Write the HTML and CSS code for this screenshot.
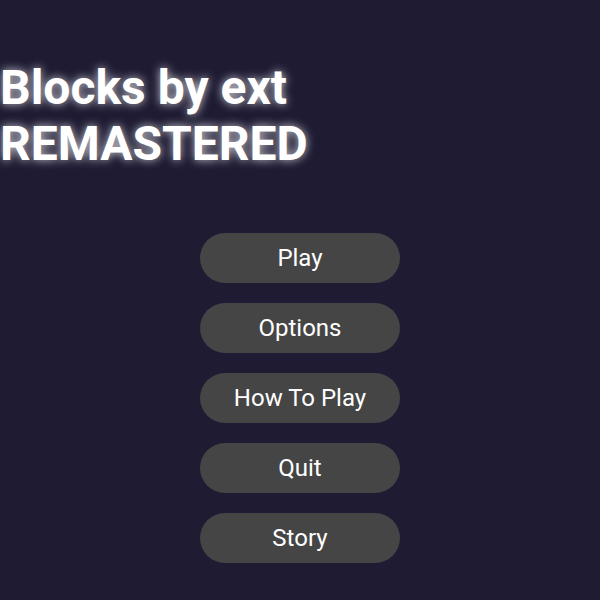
FILE: index.html
```html
<!DOCTYPE html>
<html lang="en">
<head>
    <meta charset="UTF-8">
    <meta name="viewport" content="width=device-width, initial-scale=1.0">
    <title>Blocks by ext REMASTERED</title>
    <link rel="stylesheet" href="styles.css">
</head>
<body>
    <div class="main-menu">
        <h1 class="game-title">Blocks by ext<br>REMASTERED</h1>

        <div class="menu-buttons">
            <button class="menu-btn">Play</button>
            <button class="menu-btn">Options</button>
            <button class="menu-btn">How To Play</button>
            <button class="menu-btn">Quit</button>
            <button class="menu-btn">Story</button>
        </div>
    </div>
</body>
</html>
```

FILE: styles.css
```css
:root {
    --background-color: #1e1b33;
    --button-color: #454545;
    --text-color: #ffffff;
}

body {
    font-family: 'Roboto', 'Arial', sans-serif;
    margin: 0;
    padding: 0;
    background-color: var(--background-color);
    color: var(--text-color);
    height: 100vh;
    overflow: hidden;
}

.main-menu {
    display: flex;
    flex-direction: column;
    padding-top: 60px;
}

.game-title {
    margin: 0 0 61px 0;
    font-size: 48px;
    font-weight: bold;
    line-height: 56px;
    text-shadow: 0 0 10px rgba(255, 255, 255, 0.8);
}

.menu-buttons {
    display: flex;
    flex-direction: column;
    align-items: center;
    gap: 20px;
}

.menu-btn {
    width: 200px;
    height: 50px;
    background-color: var(--button-color);
    color: var(--text-color);
    border: none;
    border-radius: 25px;
    font-family: 'Roboto', 'Arial', sans-serif;
    font-size: 24px;
    cursor: pointer;
}
```
